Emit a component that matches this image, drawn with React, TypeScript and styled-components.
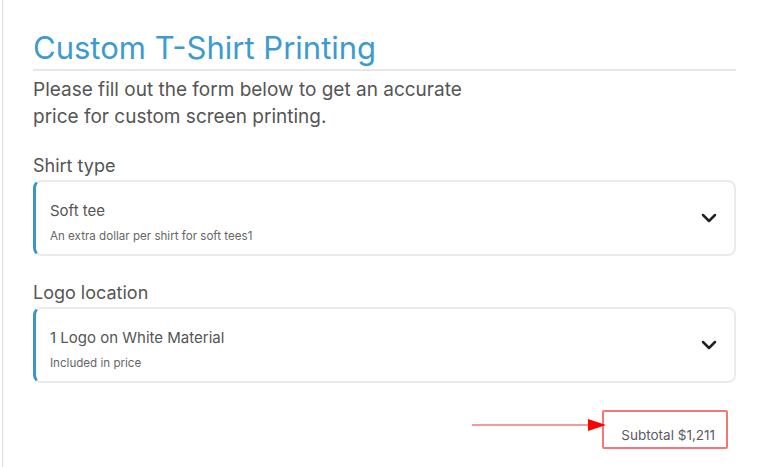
import React, { ReactElement } from 'react';
import styled, { createGlobalStyle } from 'styled-components';
import { ChevronDown } from 'lucide-react';

const GlobalStyle = createGlobalStyle`
  body {
    margin: 0;
    background: #ffffff;
    font-family: Inter, 'Noto Sans', sans-serif;
    color: #555555;
  }
`;

const Page = styled.div`
  margin-left: 2px;
  min-height: 467px;
  box-sizing: border-box;
  border-left: 1px solid #dcdce6;
  padding: 30px 29px 0 30px;
`;

const Title = styled.h1`
  margin: 0;
  font-size: 31px;
  font-weight: 400;
  line-height: 36px;
  color: #3d9bd0;
  padding-bottom: 3px;
  border-bottom: 2px solid #e6e6e6;
`;

const Intro = styled.p`
  margin: 5px 0 0;
  max-width: 470px;
  font-size: 19px;
  line-height: 27px;
  color: #555555;
`;

const Field = styled.div`
  display: flex;
  flex-direction: column;
  gap: 1px;
  margin-top: ${(p: { top: number }) => p.top}px;
`;

const Label = styled.label`
  font-size: 18px;
  line-height: 27px;
  color: #555555;
`;

const Select = styled.div`
  height: 76px;
  box-sizing: border-box;
  display: flex;
  align-items: center;
  justify-content: space-between;
  border: 2px solid #ebebeb;
  border-left: 3px solid #3b96c8;
  border-radius: 8px;
  padding: 0 13px 0 14px;
  background: #ffffff;
`;

const OptionText = styled.div`
  display: flex;
  flex-direction: column;
  gap: 6px;
  padding-top: 9px;
`;

const OptionName = styled.span`
  font-size: 15px;
  line-height: 20px;
  color: #555555;
`;

const OptionNote = styled.span`
  font-size: 11.6px;
  line-height: 18px;
  color: #666666;
`;

const SubtotalRow = styled.div`
  display: flex;
  justify-content: flex-end;
  align-items: flex-start;
  margin-top: 27px;
  padding-right: 8px;
`;

const Arrow = styled.svg`
  margin-top: 8px;
  margin-right: -4px;
  position: relative;
  z-index: 1;
`;

const SubtotalBox = styled.div`
  height: 39px;
  box-sizing: border-box;
  padding: 13px 11px 0 17px;
  border: 2px solid #f27878;
  border-radius: 2px;
  font-size: 13.5px;
  line-height: 20px;
  color: #5a5a66;
`;

const Option = ({ name, note }: { name: string; note: string }): ReactElement => (
  <Select>
    <OptionText>
      <OptionName>{name}</OptionName>
      <OptionNote>{note}</OptionNote>
    </OptionText>
    <ChevronDown size={24} strokeWidth={2.5} color="#222222" />
  </Select>
);

const App = (): ReactElement => (
  <>
    <GlobalStyle />
    <Page>
      <Title>Custom T-Shirt Printing</Title>
      <Intro>Please fill out the form below to get an accurate price for custom screen printing.</Intro>
      <Field top={22}>
        <Label>Shirt type</Label>
        <Option name="Soft tee" note="An extra dollar per shirt for soft tees1" />
      </Field>
      <Field top={23}>
        <Label>Logo location</Label>
        <Option name="1 Logo on White Material" note="Included in price" />
      </Field>
      <SubtotalRow>
        <Arrow width="134" height="14" viewBox="0 0 134 14">
          <line x1="0" y1="7" x2="118" y2="7" stroke="#f07878" strokeWidth="1.5" />
          <polygon points="116,1 134,7 116,13" fill="#ff0000" />
        </Arrow>
        <SubtotalBox>Subtotal $1,211</SubtotalBox>
      </SubtotalRow>
    </Page>
  </>
);

export default App;
